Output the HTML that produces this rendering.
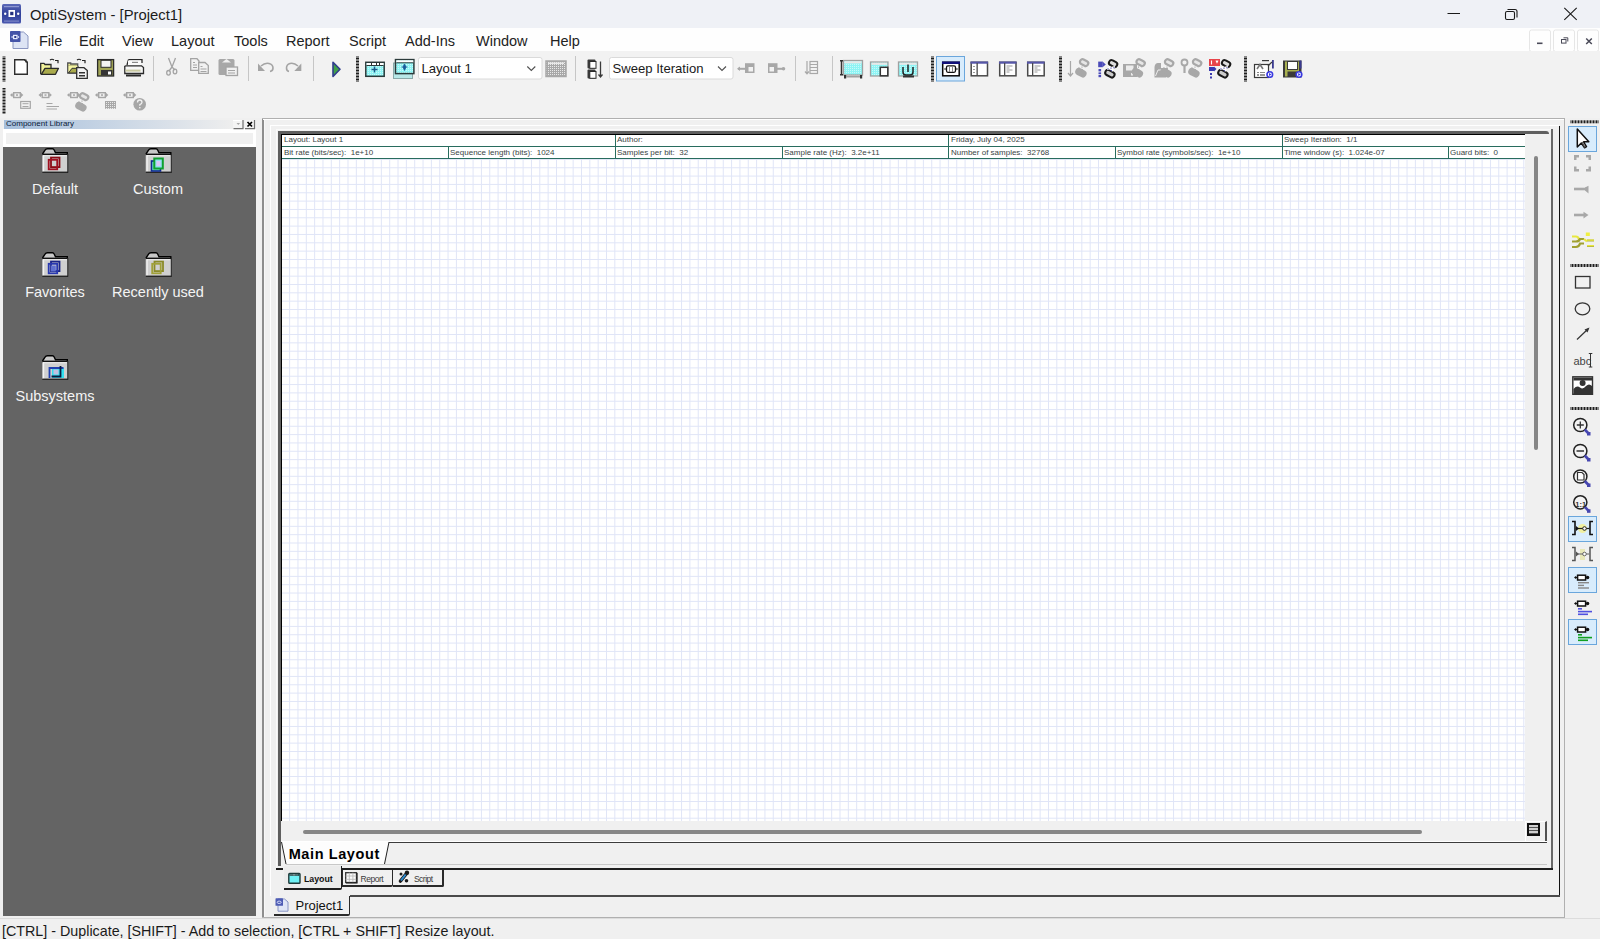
<!DOCTYPE html>
<html><head><meta charset="utf-8">
<style>
*{box-sizing:border-box;margin:0;padding:0}
html,body{width:1600px;height:939px;overflow:hidden;background:#f0f0f0;font-family:"Liberation Sans",sans-serif;color:#000}
.a{position:absolute}
.t{position:absolute;white-space:pre;line-height:1}
#title{left:0;top:0;width:1600px;height:28px;background:#eff1f6}
#menu{left:0;top:28px;width:1600px;height:23px;background:#fefefe}
#tb{left:0;top:51px;width:1600px;height:67px;background:#f2f2f2}
.grip{position:absolute;width:3px;background:repeating-linear-gradient(#1a1a1a 0 2px,transparent 2px 3px)}
.hgrip{position:absolute;height:3px;background:repeating-linear-gradient(90deg,#1a1a1a 0 2px,transparent 2px 3px)}
.sep{position:absolute;width:1px;background:#c8c8c8}
.menu{font-size:14.5px;color:#222}
.combo{position:absolute;background:#fff;border:1px solid #d9d9d9;border-radius:2px}
#lib{left:0;top:118px;width:258px;height:800px}
#libpanel{left:3px;top:147px;width:253px;height:769px;background:#646464}
.fl{position:absolute;color:#f4f4f4;font-size:14.5px;text-align:center;width:104px}
#status{left:0;top:918px;width:1600px;height:21px;background:#f0f0f0;border-top:1px solid #dcdcdc}
#page{left:282px;top:135px;width:1243px;height:686px;background-color:#fff;
 }
.hd{position:absolute;font-size:8px;color:#3a4444;white-space:pre;line-height:1}
</style></head><body>

<!-- Title bar -->
<div id="title" class="a"></div>
<div class="t" style="left:30px;top:7.7px;font-size:14.8px;color:#1b1b1b">OptiSystem - [Project1]</div>

<!-- Menu bar -->
<div id="menu" class="a"></div>
<div class="t menu" style="left:39px;top:33.8px">File</div>
<div class="t menu" style="left:79px;top:33.8px">Edit</div>
<div class="t menu" style="left:122px;top:33.8px">View</div>
<div class="t menu" style="left:171px;top:33.8px">Layout</div>
<div class="t menu" style="left:234px;top:33.8px">Tools</div>
<div class="t menu" style="left:286px;top:33.8px">Report</div>
<div class="t menu" style="left:349px;top:33.8px">Script</div>
<div class="t menu" style="left:405px;top:33.8px">Add-Ins</div>
<div class="t menu" style="left:476px;top:33.8px">Window</div>
<div class="t menu" style="left:550px;top:33.8px">Help</div>

<!-- title icons -->
<svg class="a" style="left:0;top:0" width="1600" height="56">
 <defs>
  <linearGradient id="appg" x1="0" y1="0" x2="0" y2="1"><stop offset="0" stop-color="#5a68b8"/><stop offset=".5" stop-color="#2f3f98"/><stop offset="1" stop-color="#4a58b0"/></linearGradient>
 </defs>
 <rect x="2" y="4" width="19" height="19.5" rx="1.5" fill="url(#appg)"/>
 <rect x="4" y="6" width="15" height="1.2" fill="#8c96d0"/>
 <rect x="4" y="20.5" width="15" height="1.2" fill="#7c88c8"/>
 <rect x="8.5" y="10" width="6.5" height="7" fill="#fff"/>
 <rect x="10.2" y="11.8" width="3.2" height="3.4" fill="#23307e"/>
 <circle cx="5.2" cy="13.8" r="1.2" fill="#fff"/><circle cx="18.2" cy="13.8" r="1.2" fill="#fff"/>
 <!-- menu doc icon -->
 <path d="M13,32 H23.5 L28,36 V48.5 H13 Z" fill="#dde4f4" stroke="#8a96c0" stroke-width="1"/>
 <rect x="10" y="31" width="10.5" height="11" rx="0.8" fill="#4454a8"/>
 <rect x="13" y="34.8" width="4.6" height="4.4" fill="#e8ecff"/>
 <rect x="14.3" y="36" width="2" height="2" fill="#2a3888"/>
 <path d="M11,37 L12.6,35.8 V38.2 Z M19.5,37 L17.9,35.8 V38.2 Z" fill="#e8ecff"/>
 <!-- window controls -->
 <rect x="1447.5" y="13" width="12.5" height="1" fill="#1a1a1a"/>
 <rect x="1505.5" y="11.5" width="9" height="8" rx="1.5" fill="none" stroke="#1a1a1a" stroke-width="1.1"/>
 <path d="M1507.5,9.5 H1515 Q1517,9.5 1517,11.5 V17.5" fill="none" stroke="#1a1a1a" stroke-width="1.1"/>
 <path d="M1564.3,7.8 L1576.7,19.8 M1576.7,7.8 L1564.3,19.8" stroke="#1a1a1a" stroke-width="1.1"/>
 <!-- mdi buttons -->
 <g fill="#fefefe" stroke="#e6e6e6" stroke-width="1">
  <rect x="1529.5" y="30" width="21" height="21.5" rx="2"/>
  <rect x="1553.5" y="30" width="21" height="21.5" rx="2"/>
  <rect x="1577.5" y="30" width="21" height="21.5" rx="2"/>
 </g>
 <rect x="1537" y="42.5" width="5.5" height="1.6" fill="#4a4a58"/>
 <rect x="1561.5" y="39.5" width="4.5" height="3.6" fill="none" stroke="#4a4a58" stroke-width="1"/>
 <path d="M1563.5,37.8 H1567.8 V41.5" fill="none" stroke="#4a4a58" stroke-width="1"/>
 <path d="M1586.2,38.5 L1591.8,44 M1591.8,38.5 L1586.2,44" stroke="#4a4a58" stroke-width="1.5"/>
</svg>

<!-- Toolbar -->
<div id="tb" class="a"></div>

<!-- toolbar icons -->
<svg class="a" style="left:0;top:0" width="1600" height="118">
 <!-- grips -->
 <g fill="#1a1a1a">
  <rect x="2.5" y="56" width="3" height="26" fill="url(#gp)"/>
 </g>
 <defs>
  <pattern id="gp" width="3" height="3" patternUnits="userSpaceOnUse" y="0.5"><rect width="3" height="2" fill="#1e1e1e"/></pattern>
  <pattern id="hgp" width="3" height="3" patternUnits="userSpaceOnUse"><rect width="2" height="3" fill="#262626"/></pattern>
 </defs>
 <rect x="2.5" y="88" width="3" height="26" fill="url(#gp)"/>
 <rect x="356" y="56" width="3" height="26" fill="url(#gp)"/>
 <rect x="931" y="56" width="3" height="26" fill="url(#gp)"/>
 <rect x="1059" y="56" width="3" height="26" fill="url(#gp)"/>
 <rect x="1244" y="56" width="3" height="26" fill="url(#gp)"/>
 <!-- separators -->
 <g fill="#c6c6c6">
  <rect x="153" y="56" width="1" height="25"/>
  <rect x="248" y="56" width="1" height="25"/>
  <rect x="313" y="56" width="1" height="25"/>
  <rect x="575" y="56" width="1" height="25"/>
  <rect x="795" y="56" width="1" height="25"/>
  <rect x="832" y="56" width="1" height="25"/>
 </g>
 <!-- new -->
 <path d="M14.7,59.7 H24.5 L27.3,62.5 V74.3 H14.7 Z" fill="#fff" stroke="#2e2e2e" stroke-width="1.4"/>
 <path d="M24,60 h2 v2 h2" fill="none" stroke="#2e2e2e" stroke-width="1.2"/>
 <!-- open -->
 <path d="M40.7,74.3 V63.3 H44 L45,64.5 H51 V68.3" fill="#f2f29a" stroke="#2a2a2a" stroke-width="1.3"/>
 <path d="M41.3,74.3 L45,68.3 H58.5 L55.5,74.3 Z" fill="#a9aa4c" stroke="#2a2a2a" stroke-width="1.3" stroke-linejoin="round"/>
 <path d="M50,60 q2,-1.5 4,0 M55,60.5 h3 v2.8" fill="none" stroke="#222" stroke-width="1.2"/>
 <!-- open2 -->
 <path d="M67.7,63 h3 v1 h7 v2.5 H67.7 Z" fill="#e8e890" stroke="#555" stroke-width="1.3"/>
 <path d="M67.7,66 V73 H78 V66" fill="#f4f4a0" stroke="#555" stroke-width="1.3"/>
 <path d="M68.5,73 L72,68.3 H78 V73 Z" fill="#a9aa4c" stroke="#333" stroke-width="1"/>
 <path d="M77,60 q2,-1.5 4,0 M82,60.5 h3 v2.8" fill="none" stroke="#222" stroke-width="1.2"/>
 <path d="M76.7,67.7 H84 L87.3,70.5 V78.3 H76.7 Z" fill="#f4f4f4" stroke="#2e2e2e" stroke-width="1.3"/>
 <rect x="79" y="72" width="6" height="1.5" fill="#333"/><rect x="79" y="75" width="6" height="1.5" fill="#333"/>
 <!-- save -->
 <rect x="97.6" y="59.6" width="16" height="16.4" fill="#a2a556" stroke="#2a2a2a" stroke-width="1.3"/>
 <rect x="101" y="60.3" width="10" height="7" fill="#f4f4f4" stroke="#2a2a2a" stroke-width="1"/>
 <rect x="101" y="70" width="11.5" height="5.5" fill="#353535"/>
 <rect x="108" y="71.5" width="3" height="3" fill="#fff"/>
 <!-- print -->
 <path d="M128.5,59.7 H142 V63 M128.5,59.7 L127,65" fill="#fff" stroke="#2a2a2a" stroke-width="1.3"/>
 <rect x="128" y="60.5" width="13" height="5" fill="#fafafa"/>
 <rect x="132" y="61.8" width="6" height="1.2" fill="#8a8a8a"/>
 <path d="M124.8,67.5 Q124.2,66 126,65.8 H141.5 L143.5,67.5 V73.5 H124.8 Z" fill="#f6f6f6" stroke="#2a2a2a" stroke-width="1.3"/>
 <rect x="125.5" y="69.6" width="15" height="2" fill="#c8c8a0"/>
 <rect x="126" y="74.5" width="15" height="2" fill="#2a2a2a"/>
 <!-- cut -->
 <g fill="none" stroke="#a4a4a4" stroke-width="1.3">
  <path d="M168.5,58 L172,67 M175.5,58 L172,67 M172,67 L169,71 M172,67 L175,70"/>
  <ellipse cx="168.5" cy="72.8" rx="1.8" ry="2.3"/>
  <ellipse cx="175" cy="71.5" rx="1.8" ry="2.3"/>
 </g>
 <!-- copy -->
 <g fill="#f2f2f2" stroke="#a4a4a4" stroke-width="1.3">
  <path d="M190.7,58.7 H197 L199,61 V70.3 H190.7 Z"/>
  <path d="M198.7,62.5 H205 L208.3,65.5 V73.3 H198.7 Z"/>
 </g>
 <g fill="#a4a4a4"><rect x="193" y="62" width="2" height="1"/><rect x="193" y="64.5" width="4" height="1"/><rect x="193" y="67" width="4" height="1"/><rect x="200.5" y="66" width="2" height="1"/><rect x="200.5" y="68.5" width="6" height="1"/><rect x="200.5" y="71" width="6" height="1"/></g>
 <!-- paste -->
 <rect x="218.5" y="59" width="16" height="16" rx="1.5" fill="#a8a8a8"/>
 <path d="M222,62.5 L226.5,59 L231,62.5 Z" fill="#f0f0f0"/>
 <rect x="226" y="67" width="11.5" height="8.5" fill="#f0f0f0" stroke="#a4a4a4" stroke-width="1.3"/>
 <rect x="228" y="70" width="7" height="1" fill="#a4a4a4"/><rect x="228" y="72.5" width="7" height="1" fill="#a4a4a4"/>
 <!-- undo/redo -->
 <g fill="none" stroke="#a4a4a4" stroke-width="1.6">
  <path d="M261,66 Q265,62.5 269,63.5 Q273,64.5 273,68 Q273,71 270,71.5"/>
  <path d="M298,66 Q294,62.5 290,63.5 Q286.5,64.5 286.5,68 Q286.5,71 289,71.5"/>
 </g>
 <path d="M258,63.5 V71 H265 Z" fill="#a4a4a4"/>
 <path d="M301.3,63.5 V71 H294.3 Z" fill="#a4a4a4"/>
 <!-- play -->
 <path d="M333,62.2 L340,69.3 L333,76.5 Z" fill="#40a048" stroke="#303c8c" stroke-width="1.6" stroke-linejoin="round"/>
</svg>

<!-- toolbar icons part 2 -->
<svg class="a" style="left:0;top:0" width="1600" height="118">
 <defs>
  <pattern id="cy" width="2" height="2" patternUnits="userSpaceOnUse"><rect width="2" height="2" fill="#8ef4f4"/><rect width="1" height="1" fill="#c8fafa"/></pattern>
  <pattern id="gd" width="2" height="2" patternUnits="userSpaceOnUse"><rect width="2" height="2" fill="#a8a8a8"/><rect width="1" height="1" fill="#e8e8e8"/></pattern>
  <g id="chD">
   <rect x="4.8" y="1" width="8.6" height="5.2" rx="2.4" transform="rotate(28 9.1 3.6)" fill="#ddd" stroke="#1a1a1a" stroke-width="2"/>
   <rect x="1" y="11" width="9.8" height="5.4" rx="2.6" transform="rotate(28 5.9 13.7)" fill="#ccc" stroke="#1a1a1a" stroke-width="2"/>
   <path d="M3,9 L11,7 M5,6.5 L9,11" stroke="#fff" stroke-width="2.2"/>
   <path d="M3.5,8.8 h1 M6.5,8.2 h1 M9.5,7.6 h1 M6.8,10.6 h1" stroke="#3a3aa0" stroke-width="1.2"/>
  </g>
  <g id="chG">
   <rect x="4.8" y="1" width="8.6" height="5.2" rx="2.4" transform="rotate(28 9.1 3.6)" fill="#e6e6e6" stroke="#a8a8a8" stroke-width="2.2"/>
   <rect x="1" y="11" width="9.8" height="5.4" rx="2.6" transform="rotate(28 5.9 13.7)" fill="#a8a8a8" stroke="#a8a8a8" stroke-width="2"/>
   <path d="M3.5,8.8 h1 M6.5,8.2 h1 M9.5,7.6 h1 M6.8,10.6 h1" stroke="#a8a8a8" stroke-width="1.2"/>
  </g>
 </defs>
 <!-- layout add -->
 <rect x="365.8" y="62.3" width="18.4" height="14" fill="url(#cy)" stroke="#2b3a3a" stroke-width="1.5"/>
 <rect x="366.6" y="63" width="17" height="2.2" fill="#fff"/>
 <rect x="371" y="62.5" width="1" height="2.5" fill="#333"/><rect x="376" y="62.5" width="1" height="2.5" fill="#333"/><rect x="379" y="62.5" width="1" height="2.5" fill="#333"/>
 <rect x="366.5" y="65" width="17" height="1" fill="#2b3a3a"/>
 <path d="M374.5,66.5 V72.5 M371.5,69.5 H377.5" stroke="#1a5a8a" stroke-width="1.4"/>
 <!-- layout icon2 -->
 <rect x="393.5" y="63" width="19" height="15.5" fill="#b8e8e8" stroke="#8aa8a8" stroke-width="1"/>
 <rect x="395.5" y="59.6" width="18.4" height="14" fill="url(#cy)" stroke="#2b3a3a" stroke-width="1.5"/>
 <rect x="396.3" y="60.3" width="17" height="2.2" fill="#fff"/>
 <rect x="396.3" y="62.3" width="17" height="1" fill="#2b3a3a"/>
 <path d="M404.5,64 L406,67 L404.5,70.5 L403,67 Z M401.5,67 H407.5" fill="#1a5a9a" stroke="#1a5a9a" stroke-width="0.8"/>
 <!-- combos -->
 <rect x="418.5" y="57.5" width="123.5" height="21.5" rx="2" fill="#fff" stroke="#dadada" stroke-width="1"/>
 <path d="M527.3,66.5 L531.3,70.5 L535.3,66.5" fill="none" stroke="#505050" stroke-width="1.1"/>
 <rect x="609.5" y="57.5" width="123.5" height="21.5" rx="2" fill="#fff" stroke="#dadada" stroke-width="1"/>
 <path d="M718,66.5 L722,70.5 L726,66.5" fill="none" stroke="#505050" stroke-width="1.1"/>
 <!-- grid gray -->
 <rect x="546" y="61" width="20" height="15.5" fill="url(#gd)"/>
 <rect x="546" y="61" width="20" height="15.5" fill="none" stroke="#a8a8a8" stroke-width="1.5"/>
 <rect x="548" y="62.5" width="16" height="1.5" fill="#e8e8e8"/>
 <!-- sweep icon -->
 <rect x="587.5" y="59.5" width="8" height="9" rx="1" fill="#3a3a3a"/>
 <rect x="589.8" y="61.5" width="6.2" height="6.8" fill="#fff" stroke="#2a2a2a" stroke-width="1"/>
 <rect x="587.5" y="69.5" width="8" height="9" rx="1" fill="#3a3a3a"/>
 <rect x="589.8" y="71.5" width="6.2" height="6.8" fill="#fff" stroke="#2a2a2a" stroke-width="1"/>
 <path d="M600.5,61.5 V76.5 M598.5,74.5 L600.5,77 L602.5,74.5" fill="none" stroke="#3a3a3a" stroke-width="1.3"/>
 <!-- 747 / 776 -->
 <rect x="745" y="63.2" width="9.5" height="9.8" fill="#a8a8a8"/><rect x="748.5" y="67" width="4.5" height="4.5" fill="#f2f2f2"/>
 <path d="M738,68.8 H745" stroke="#a8a8a8" stroke-width="2"/><path d="M737,68.8 L740,66.5 V71 Z" fill="#a8a8a8"/>
 <rect x="768" y="63.2" width="9.5" height="9.8" fill="#a8a8a8"/><rect x="769.5" y="67" width="4.5" height="4.5" fill="#f2f2f2"/>
 <path d="M777,68.8 H784" stroke="#a8a8a8" stroke-width="2"/><circle cx="783.5" cy="68.8" r="1.8" fill="#a8a8a8"/>
 <!-- 812 -->
 <path d="M807,61 V73.5 M805,71.5 L807,73.8 L809,71.5" fill="none" stroke="#a8a8a8" stroke-width="1.2"/>
 <rect x="810" y="61.5" width="7.5" height="12" fill="none" stroke="#a8a8a8" stroke-width="1.2"/>
 <path d="M810,64.5 H817.5 M810,67.5 H817.5 M810,70.5 H817.5" stroke="#a8a8a8" stroke-width="1"/>
 <!-- A -->
 <rect x="843.5" y="60.5" width="19" height="14.5" fill="url(#cy)" stroke="#a0a0a0" stroke-width="1.3"/>
 <rect x="844.5" y="61.2" width="17" height="2.2" fill="#e8e8e8"/>
 <path d="M841.5,60.5 V75 M840,60.8 H843 M840,74.8 H843" stroke="#333" stroke-width="1.5"/>
 <rect x="844" y="75" width="2.2" height="3.5" fill="#333"/><rect x="860" y="75" width="2.2" height="3.5" fill="#333"/>
 <rect x="846" y="76" width="14" height="1.5" fill="#a0a0a0"/>
 <!-- B -->
 <rect x="870.5" y="62" width="17.5" height="14" fill="url(#cy)" stroke="#a0a0a0" stroke-width="1.3"/>
 <rect x="871.5" y="62.8" width="15.5" height="2" fill="#e8e8e8"/>
 <rect x="880.3" y="67.3" width="7.5" height="8.5" fill="#fff" stroke="#333" stroke-width="1.5"/>
 <!-- C -->
 <rect x="898.5" y="62" width="19" height="14" fill="url(#cy)" stroke="#a0a0a0" stroke-width="1.3"/>
 <rect x="899.5" y="62.8" width="17" height="2" fill="#e8e8e8"/>
 <path d="M903,67 V72 Q903,75 906,75 H910 Q913,75 913,72 V67 M908,64.5 V72" fill="none" stroke="#222" stroke-width="1.5"/>
 <rect x="903" y="75.5" width="11" height="2" fill="#333"/>
 <!-- selected button -->
 <rect x="936.5" y="56.5" width="28" height="24.5" fill="#d8ecfc" stroke="#6aa6dc" stroke-width="1"/>
 <!-- D -->
 <rect x="942.7" y="62.3" width="16.5" height="13.5" fill="#fff" stroke="#0a0a0a" stroke-width="1.5"/>
 <rect x="942" y="61.5" width="18" height="2.5" fill="#10107a"/>
 <rect x="946.5" y="65.8" width="9" height="6.5" rx="1.5" fill="#fff" stroke="#111" stroke-width="1.3"/>
 <path d="M949.5,66 V72 M952.5,66 V72" stroke="#888" stroke-width="1"/>
 <path d="M944.2,69 H946.5 M955.5,69 H957.8" stroke="#111" stroke-width="1.2"/>
 <!-- E F G -->
 <g fill="#fff" stroke="#4a4a4a" stroke-width="1.5">
  <rect x="971.2" y="62.3" width="16.3" height="13.5"/>
  <rect x="999.7" y="62.3" width="16.3" height="13.5"/>
  <rect x="1027.7" y="62.3" width="16.5" height="13.5"/>
 </g>
 <g fill="#5656a8">
  <rect x="970.5" y="61.5" width="17.5" height="2.2"/>
  <rect x="999" y="61.5" width="17.5" height="2.2"/>
  <rect x="1027" y="61.5" width="17.5" height="2.2"/>
 </g>
 <g fill="#4a4a4a">
  <rect x="976.5" y="63" width="1.3" height="12.5"/>
  <rect x="1004" y="63" width="1.3" height="12.5"/>
  <rect x="1032" y="63" width="1.3" height="12.5"/>
 </g>
 <g fill="#9a9a9a">
  <rect x="973" y="66" width="2" height="1"/><rect x="973" y="69" width="2" height="1"/><rect x="973" y="72" width="2" height="1"/>
  <rect x="1006.5" y="65.5" width="6" height="1"/><rect x="1006.5" y="67.5" width="3" height="1"/><rect x="1006.5" y="69.5" width="6" height="1"/><rect x="1006.5" y="71.5" width="3" height="1"/>
  <rect x="1034.5" y="65.5" width="6" height="1"/><rect x="1034.5" y="67.5" width="3" height="1"/><rect x="1034.5" y="69.5" width="6" height="1"/><rect x="1034.5" y="71.5" width="3" height="1"/>
 </g>
 <!-- H gray -->
 <path d="M1070.5,61 V75.5 M1068,73 L1070.5,76 L1073,73" fill="none" stroke="#a8a8a8" stroke-width="1.2"/>
 <use href="#chG" x="1075" y="59"/>
 <!-- I -->
 <rect x="1098.2" y="61.6" width="4.5" height="5.6" fill="#4a4ab8"/><path d="M1102.5,61.6 L1105.8,64.4 L1102.5,67.2 Z" fill="#4a4ab8"/>
 <rect x="1098.5" y="69" width="2.6" height="2.4" fill="#4a4ab8"/><rect x="1098.5" y="72.4" width="2.6" height="1.8" fill="#4a4ab8"/><rect x="1098.5" y="75" width="2.6" height="2.2" fill="#4a4ab8"/>
 <use href="#chD" x="1104" y="60"/>
 <!-- J gray save + link -->
 <rect x="1123" y="64" width="14" height="13" fill="#a8a8a8"/><rect x="1126" y="65.5" width="7.5" height="5" fill="#ececec"/><rect x="1131" y="73" width="2" height="2.5" fill="#ececec"/>
 <use href="#chG" x="1131.5" y="59"/>
 <!-- K gray folder + link -->
 <path d="M1154.5,67 Q1155,63 1158,63 H1161 V68 H1168 L1166,77.5 H1154.5 Z" fill="#a8a8a8"/>
 <path d="M1155.5,76 L1158,70 H1166" fill="none" stroke="#ececec" stroke-width="1"/>
 <use href="#chG" x="1160" y="59"/>
 <!-- L key + link -->
 <circle cx="1184.5" cy="62.5" r="3" fill="none" stroke="#a8a8a8" stroke-width="1.8"/>
 <path d="M1184.5,65.5 V73" stroke="#a8a8a8" stroke-width="2.2"/>
 <use href="#chG" x="1188" y="59"/>
 <!-- M red/blue -->
 <rect x="1209" y="59" width="11" height="7" fill="#e8444a"/>
 <path d="M1211.5,60.5 V64.5 M1216,60.5 L1217,62.5 L1218,60.5" stroke="#fff" stroke-width="1.1" fill="none"/>
 <rect x="1209" y="67" width="5" height="4" fill="#3a3ab0"/><path d="M1214,66.5 L1216.5,69 L1214,71.5 Z" fill="#3a3ab0"/>
 <rect x="1210" y="73" width="2" height="2" fill="#3a3ab0"/><rect x="1210" y="76.5" width="2" height="2" fill="#3a3ab0"/>
 <use href="#chD" x="1217" y="60"/>
 <!-- N -->
 <rect x="1254.5" y="64.5" width="14" height="13" fill="#fff" stroke="#3a3a3a" stroke-width="1.2"/>
 <path d="M1257,69 L1260,64.5 L1263,69" fill="none" stroke="#777" stroke-width="1.6"/>
 <rect x="1262" y="60" width="7" height="1.2" fill="#3a3a3a"/>
 <rect x="1272" y="60" width="1.8" height="8.5" fill="#3a3a90"/>
 <path d="M1268,66 L1272,62" stroke="#3a3a3a" stroke-width="1.2"/>
 <rect x="1257" y="72" width="2" height="1" fill="#888"/><rect x="1260" y="72" width="5" height="1" fill="#888"/>
 <rect x="1257" y="74.5" width="2" height="1" fill="#333"/><rect x="1260" y="74.5" width="5" height="1" fill="#333"/>
 <circle cx="1269.8" cy="74.5" r="2.8" fill="#fff" stroke="#3a3ae0" stroke-width="1.6"/><path d="M1269,73 L1271.5,74.5 L1269,76 Z" fill="#3a3ae0"/>
 <!-- O save -->
 <rect x="1283" y="60.5" width="18.5" height="17" fill="#3a3a3a"/>
 <rect x="1285" y="61.5" width="14" height="15" fill="#a8b050"/>
 <rect x="1287.5" y="61.5" width="10" height="8" fill="#fff" stroke="#3a3a3a" stroke-width="1"/>
 <rect x="1287.5" y="71.5" width="10" height="5.5" fill="#3a3a3a"/>
 <rect x="1299.5" y="60.5" width="2" height="8" fill="#3a3a90"/>
 <circle cx="1299" cy="74.5" r="2.8" fill="#fff" stroke="#3a3ae0" stroke-width="1.6"/><path d="M1298.2,73 L1300.7,74.5 L1298.2,76 Z" fill="#3a3ae0"/>
</svg>
<div class="t" style="left:421.5px;top:61.5px;font-size:13.1px;color:#1a1a1a">Layout 1</div>
<div class="t" style="left:612.5px;top:61.5px;font-size:13.1px;color:#1a1a1a">Sweep Iteration</div>

<!-- toolbar row 2 -->
<svg class="a" style="left:0;top:0" width="160" height="118">
 <defs>
  <g id="blk">
   <path d="M0,3 L2.5,0.8 V5.2 Z" fill="#a6a6a6"/>
   <rect x="2" y="2.3" width="2" height="1.4" fill="#a6a6a6"/>
   <rect x="3.7" y="0.7" width="6.6" height="4.8" fill="#f0f0f0" stroke="#a6a6a6" stroke-width="1.4"/>
   <rect x="6" y="2.3" width="2" height="1.5" fill="#a6a6a6"/>
   <rect x="10" y="2.3" width="1.5" height="1.4" fill="#a6a6a6"/>
   <path d="M11,0.8 L13.3,3 L11,5.2 Z" fill="#a6a6a6"/>
  </g>
 </defs>
 <use href="#blk" x="10" y="92"/>
 <use href="#blk" x="38.5" y="92"/>
 <use href="#blk" x="67" y="92"/>
 <use href="#blk" x="95" y="92"/>
 <use href="#blk" x="123" y="92"/>
 <rect x="20.7" y="101.5" width="9.6" height="6.8" fill="none" stroke="#a6a6a6" stroke-width="1.2"/>
 <rect x="22.5" y="103.2" width="6" height="1" fill="#a6a6a6"/><rect x="22.5" y="106" width="6" height="1" fill="#a6a6a6"/>
 <rect x="46.5" y="103" width="6" height="1" fill="#a6a6a6"/><rect x="46.5" y="106" width="12.5" height="1" fill="#a6a6a6"/><rect x="46.5" y="108.5" width="10.5" height="1" fill="#a6a6a6"/>
 <use href="#chG" x="75" y="93"/>
 <rect x="105" y="101" width="11" height="7.8" fill="url(#gd)"/>
 <circle cx="139.7" cy="104.3" r="6.3" fill="#a6a6a6"/>
 <path d="M137.5,102.5 Q137.5,100 139.7,100 Q142,100 142,102.3 Q142,103.8 139.8,104.6 V105.8" fill="none" stroke="#f0f0f0" stroke-width="1.3"/>
 <rect x="139.1" y="107" width="1.4" height="1.4" fill="#f0f0f0"/>
</svg>

<!-- Component library -->
<div class="a" style="left:4px;top:120px;width:229px;height:9px;background:linear-gradient(90deg,#a6bfdc,#eeeeee)"></div>
<div class="t" style="left:6px;top:120px;font-size:8px;color:#0a1a3a">Component Library</div>
<div class="a" style="left:3px;top:129px;width:253px;height:18px;background:#fff"></div>
<div class="a" style="left:6px;top:133px;width:247px;height:11px;background:#f0f0f0"></div>
<svg class="a" style="left:230px;top:118px" width="28" height="14">
 <rect x="3" y="2" width="10" height="9" fill="#f4f4f4"/>
 <path d="M3,2.5 H13" stroke="#fff" stroke-width="1"/>
 <path d="M3.5,10.6 H13 V2" fill="none" stroke="#707070" stroke-width="1.2"/>
 <path d="M6.5,5 L8.3,7 L10.1,5 Z" fill="#a8a8a8"/>
 <rect x="15" y="2" width="9.5" height="9" fill="#f4f4f4"/>
 <path d="M15,10.6 H24.5 V2" fill="none" stroke="#707070" stroke-width="1.2"/>
 <path d="M17.5,4 L22,8.5 M22,4 L17.5,8.5" stroke="#000" stroke-width="1.7"/>
</svg>

<div id="libpanel" class="a"></div>
<div class="fl" style="left:3px;top:180.8px">Default</div>
<div class="fl" style="left:106px;top:180.8px">Custom</div>
<div class="fl" style="left:3px;top:284.3px">Favorites</div>
<div class="fl" style="left:106px;top:284.3px">Recently used</div>
<div class="fl" style="left:3px;top:387.8px">Subsystems</div>

<!-- folder icons -->
<svg class="a" style="left:0;top:140px" width="258" height="250">
 <defs>
  <g id="fold">
   <path d="M0.5,6 L3,2.2 Q3.8,0.8 5.5,0.8 H10.5 Q11.6,0.8 12.3,2.2 L13.5,4.8 H25.3 V6" fill="#c8c8c8" stroke="#000" stroke-width="1.4"/>
   <rect x="0.2" y="6.3" width="25.6" height="18.2" fill="#d0d0d0"/>
   <rect x="0.2" y="5.6" width="25.6" height="1.6" fill="#111"/>
   <rect x="1" y="7.2" width="24" height="1" fill="#f4f4f4"/>
   <rect x="1" y="7.2" width="1.2" height="16.5" fill="#f4f4f4"/>
   <rect x="0.2" y="23.6" width="25.8" height="1.3" fill="#1a1a1a"/>
   <rect x="25.3" y="6" width="1" height="18.8" fill="#222"/>
  </g>
 </defs>
 <use href="#fold" x="42" y="8"/>
 <use href="#fold" x="145.5" y="8"/>
 <use href="#fold" x="42" y="112"/>
 <use href="#fold" x="145.5" y="112"/>
 <use href="#fold" x="42" y="215"/>
 <!-- emblems -->
 <g fill="none" stroke-width="1.8">
  <rect x="51" y="17.6" width="8.5" height="9.5" stroke="#8a0a14"/>
  <rect x="48.7" y="19.8" width="8.5" height="9.5" stroke="#a01020"/>
 </g>
 <rect x="151.5" y="21" width="9" height="10" fill="#70e8d0" stroke="#102890" stroke-width="1.6"/>
 <rect x="154.3" y="18.5" width="8.5" height="10" fill="#90e0f0" stroke="#10a030" stroke-width="2"/>
 <rect x="156.5" y="21" width="4" height="5" fill="#d8c8f8"/>
 <g fill="none" stroke-width="1.8">
  <rect x="51" y="121.6" width="8.5" height="9.5" stroke="#1a2488"/>
  <rect x="48.7" y="123.8" width="8.5" height="9.5" stroke="#2838b0"/>
 </g>
 <rect x="50.8" y="125.5" width="5" height="6" fill="#6070d0"/>
 <g fill="none" stroke-width="1.8">
  <rect x="154.5" y="121.6" width="8.5" height="9.5" stroke="#8a8a28"/>
  <rect x="152.2" y="123.8" width="8.5" height="9.5" stroke="#a0a038"/>
 </g>
 <rect x="52" y="228" width="12" height="10" fill="#30e0f0"/>
 <path d="M49.5,238 V228 H63.5" fill="none" stroke="#2040b0" stroke-width="1.8"/>
 <path d="M51.5,236.5 H60.5 V226" fill="none" stroke="#0a1a40" stroke-width="1.8"/>
 <rect x="53.5" y="229.5" width="5" height="5" fill="#c0c0e0"/>
</svg>
<!-- MDI client -->
<div class="a" style="left:262px;top:118px;width:1303px;height:800px;border:1px solid #b0b0b0;background:#f0f0f0"></div>
<div class="a" style="left:262px;top:119px;width:2px;height:798px;background:#8e8e8e"></div>
<div class="a" style="left:264px;top:119px;width:1px;height:798px;background:#f8f8f8"></div>
<div class="a" style="left:263px;top:119px;width:1301px;height:1px;background:#fff"></div>
<!-- Project1 child frame -->
<div class="a" style="left:270px;top:125px;width:1289px;height:1px;background:#fff"></div>
<div class="a" style="left:270px;top:125px;width:1px;height:771px;background:#fff"></div>
<div class="a" style="left:1559px;top:126px;width:1px;height:771px;background:#111"></div>
<div class="a" style="left:350px;top:895px;width:1210px;height:2px;background:#4a4a4a"></div>
<!-- Layout child frame -->
<div class="a" style="left:276px;top:129px;width:1275px;height:1px;background:#fafafa"></div>
<div class="a" style="left:276px;top:129px;width:1px;height:740px;background:#fafafa"></div>
<div class="a" style="left:1551px;top:129px;width:2px;height:741px;background:#686868"></div>
<div class="a" style="left:342px;top:868px;width:1211px;height:2px;background:#1e1e1e"></div>
<div class="a" style="left:276px;top:868px;width:7px;height:2px;background:#1e1e1e"></div>
<!-- layout view border -->
<div class="a" style="left:278px;top:131px;width:1271px;height:3px;background:#5f5f5f;border-top-right-radius:3px"></div>
<div class="a" style="left:278px;top:131px;width:3px;height:735px;background:#5f5f5f"></div>
<div class="a" style="left:281px;top:134px;width:1244px;height:1px;background:#000"></div>
<div class="a" style="left:281px;top:134px;width:1px;height:687px;background:#000"></div>
<!-- page -->
<div id="page" class="a"></div>
<svg class="a" style="left:282px;top:135px" width="1243" height="686"><path d="M7.62,0V686M15.96,0V686M24.30,0V686M32.64,0V686M40.98,0V686M49.31,0V686M57.65,0V686M65.99,0V686M74.33,0V686M82.67,0V686M91.01,0V686M99.35,0V686M107.69,0V686M116.03,0V686M124.37,0V686M132.70,0V686M141.04,0V686M149.38,0V686M157.72,0V686M166.06,0V686M174.40,0V686M182.74,0V686M191.08,0V686M199.42,0V686M207.76,0V686M216.09,0V686M224.43,0V686M232.77,0V686M241.11,0V686M249.45,0V686M257.79,0V686M266.13,0V686M274.47,0V686M282.81,0V686M291.15,0V686M299.49,0V686M307.82,0V686M316.16,0V686M324.50,0V686M332.84,0V686M341.18,0V686M349.52,0V686M357.86,0V686M366.20,0V686M374.54,0V686M382.88,0V686M391.21,0V686M399.55,0V686M407.89,0V686M416.23,0V686M424.57,0V686M432.91,0V686M441.25,0V686M449.59,0V686M457.93,0V686M466.27,0V686M474.60,0V686M482.94,0V686M491.28,0V686M499.62,0V686M507.96,0V686M516.30,0V686M524.64,0V686M532.98,0V686M541.32,0V686M549.66,0V686M557.99,0V686M566.33,0V686M574.67,0V686M583.01,0V686M591.35,0V686M599.69,0V686M608.03,0V686M616.37,0V686M624.71,0V686M633.05,0V686M641.38,0V686M649.72,0V686M658.06,0V686M666.40,0V686M674.74,0V686M683.08,0V686M691.42,0V686M699.76,0V686M708.10,0V686M716.44,0V686M724.77,0V686M733.11,0V686M741.45,0V686M749.79,0V686M758.13,0V686M766.47,0V686M774.81,0V686M783.15,0V686M791.49,0V686M799.83,0V686M808.16,0V686M816.50,0V686M824.84,0V686M833.18,0V686M841.52,0V686M849.86,0V686M858.20,0V686M866.54,0V686M874.88,0V686M883.22,0V686M891.55,0V686M899.89,0V686M908.23,0V686M916.57,0V686M924.91,0V686M933.25,0V686M941.59,0V686M949.93,0V686M958.27,0V686M966.61,0V686M974.94,0V686M983.28,0V686M991.62,0V686M999.96,0V686M1008.30,0V686M1016.64,0V686M1024.98,0V686M1033.32,0V686M1041.66,0V686M1050.00,0V686M1058.33,0V686M1066.67,0V686M1075.01,0V686M1083.35,0V686M1091.69,0V686M1100.03,0V686M1108.37,0V686M1116.71,0V686M1125.05,0V686M1133.39,0V686M1141.72,0V686M1150.06,0V686M1158.40,0V686M1166.74,0V686M1175.08,0V686M1183.42,0V686M1191.76,0V686M1200.10,0V686M1208.44,0V686M1216.78,0V686M1225.11,0V686M1233.45,0V686M1241.79,0V686M0,7.73H1243M0,16.07H1243M0,24.41H1243M0,32.75H1243M0,41.09H1243M0,49.43H1243M0,57.77H1243M0,66.11H1243M0,74.44H1243M0,82.78H1243M0,91.12H1243M0,99.46H1243M0,107.80H1243M0,116.14H1243M0,124.48H1243M0,132.82H1243M0,141.16H1243M0,149.50H1243M0,157.83H1243M0,166.17H1243M0,174.51H1243M0,182.85H1243M0,191.19H1243M0,199.53H1243M0,207.87H1243M0,216.21H1243M0,224.55H1243M0,232.89H1243M0,241.22H1243M0,249.56H1243M0,257.90H1243M0,266.24H1243M0,274.58H1243M0,282.92H1243M0,291.26H1243M0,299.60H1243M0,307.94H1243M0,316.28H1243M0,324.61H1243M0,332.95H1243M0,341.29H1243M0,349.63H1243M0,357.97H1243M0,366.31H1243M0,374.65H1243M0,382.99H1243M0,391.33H1243M0,399.67H1243M0,408.01H1243M0,416.34H1243M0,424.68H1243M0,433.02H1243M0,441.36H1243M0,449.70H1243M0,458.04H1243M0,466.38H1243M0,474.72H1243M0,483.06H1243M0,491.40H1243M0,499.73H1243M0,508.07H1243M0,516.41H1243M0,524.75H1243M0,533.09H1243M0,541.43H1243M0,549.77H1243M0,558.11H1243M0,566.45H1243M0,574.79H1243M0,583.12H1243M0,591.46H1243M0,599.80H1243M0,608.14H1243M0,616.48H1243M0,624.82H1243M0,633.16H1243M0,641.50H1243M0,649.84H1243M0,658.18H1243M0,666.51H1243M0,674.85H1243M0,683.19H1243" stroke="#e0e5f7" stroke-width="1" fill="none"/></svg>

<!-- scrollbars -->
<div class="a" style="left:1534px;top:156px;width:4px;height:294px;background:#868686;border-radius:2px"></div>
<div class="a" style="left:303px;top:830px;width:1119px;height:4px;background:#868686;border-radius:2px"></div>
<!-- corner button -->
<div class="a" style="left:1525px;top:821px;width:22px;height:22px;background:#f0f0f0;border-right:2px solid #505050;border-bottom:2px solid #505050;border-top:1px solid #fff;border-left:1px solid #fff"></div>
<div class="a" style="left:1527px;top:823px;width:13px;height:13px;background:#111"></div>
<div class="a" style="left:1529px;top:825px;width:9px;height:9px;background:repeating-linear-gradient(#d0d0d0 0 2px,#555 2px 3px)"></div>
<!-- main layout tab strip -->
<div class="a" style="left:282px;top:841px;width:1265px;height:1px;background:#fff"></div>
<div class="a" style="left:389px;top:842px;width:1158px;height:1px;background:#3c3c3c"></div>
<svg class="a" style="left:278px;top:841px" width="115" height="25">
 <polygon points="3,1 111,1 106,23 8,23" fill="#fdfdfd"/>
 <line x1="3.5" y1="1" x2="8" y2="23" stroke="#222" stroke-width="1"/>
 <line x1="111" y1="1" x2="106.5" y2="23" stroke="#222" stroke-width="1"/>
</svg>
<div class="a" style="left:286px;top:864px;width:1261px;height:1px;background:#c8c8c8"></div>
<div class="t" style="left:288.7px;top:846.5px;font-size:14.5px;font-weight:bold;letter-spacing:0.6px">Main Layout</div>
<!-- Layout/Report/Script tabs -->
<div class="a" style="left:284px;top:866px;width:58px;height:24px;background:#ebebeb;border-bottom:2px solid #1e1e1e;border-right:1px solid #1e1e1e;border-bottom-right-radius:2px"></div>
<div class="a" style="left:342px;top:870px;width:51px;height:17px;background:#f0f0f0;border-bottom:2px solid #2a2a2a;border-right:1px solid #2a2a2a;border-left:1px solid #2a2a2a;border-bottom-right-radius:2px"></div>
<div class="a" style="left:393px;top:870px;width:51px;height:17px;background:#f0f0f0;border-bottom:2px solid #2a2a2a;border-right:2px solid #2a2a2a;border-bottom-right-radius:2px"></div>
<div class="t" style="left:303.9px;top:874.5px;font-size:8.8px;font-weight:bold;color:#111">Layout</div>
<div class="t" style="left:360.6px;top:874.5px;font-size:8.5px;letter-spacing:-0.5px;color:#3a3a3a">Report</div>
<div class="t" style="left:413.9px;top:874.5px;font-size:8.5px;letter-spacing:-0.5px;color:#3a3a3a">Script</div>
<!-- Project1 tab -->
<div class="a" style="left:274px;top:896px;width:76px;height:20px;background:#f0f0f0;border-bottom:2px solid #2a2a2a;border-right:1px solid #2a2a2a;border-bottom-right-radius:2px"></div>
<div class="t" style="left:295.5px;top:898.5px;font-size:13px;color:#111">Project1</div>
<!-- tab icons -->
<svg class="a" style="left:270px;top:866px" width="180" height="50">
 <!-- layout icon -->
 <rect x="18.8" y="7.5" width="11.2" height="9.8" rx="0.8" fill="#6ef0f4" stroke="#1d3838" stroke-width="1.4"/>
 <rect x="19.5" y="8.2" width="9.8" height="1.6" fill="#1d3838"/>
 <rect x="20.5" y="8.5" width="1" height="0.8" fill="#ccc"/><rect x="22.5" y="8.5" width="3" height="0.8" fill="#ccc"/><rect x="26.5" y="8.5" width="1" height="0.8" fill="#ccc"/>
 <!-- report icon -->
 <rect x="75.7" y="6.7" width="10.8" height="9.8" fill="#fafafa" stroke="#333" stroke-width="1.3"/>
 <path d="M79.3,6.7 V16.5 M82.9,6.7 V16.5 M75.7,10 H86.5 M75.7,13.3 H86.5" stroke="#bbb" stroke-width="0.9"/>
 <path d="M76,16.8 H87 V7" fill="none" stroke="#222" stroke-width="1.2"/>
 <!-- script icon -->
 <path d="M130.5,15 L136.5,7.5" stroke="#1a1a1a" stroke-width="3.6" stroke-linecap="round"/>
 <path d="M131,14.5 L136,8" stroke="#2a8ad0" stroke-width="2"/>
 <circle cx="137" cy="6.7" r="2.2" fill="#1a1a1a"/><circle cx="136.5" cy="14.8" r="1.8" fill="#1a1a1a"/><circle cx="131" cy="8" r="1.5" fill="#1a1a1a"/>
 <!-- project icon -->
 <path d="M8,33 H14.5 L18,36 V45.2 H8 Z" fill="#e0e6f6" stroke="#8894c4" stroke-width="1"/>
 <rect x="5.5" y="32.3" width="7.5" height="7.5" rx="0.6" fill="#4e5cb4"/>
 <ellipse cx="9.2" cy="36.3" rx="2" ry="1.2" fill="none" stroke="#dfe4ff" stroke-width="0.9"/>
</svg>

<!-- header table -->
<div class="a" style="left:282px;top:135px;width:1243px;height:24px;background:#fff"></div>
<div class="a" style="left:282px;top:146px;width:1243px;height:1px;background:#286c5e"></div>
<div class="a" style="left:282px;top:158px;width:1243px;height:1px;background:#286c5e"></div>
<div class="a" style="left:615px;top:135px;width:1px;height:24px;background:#286c5e"></div>
<div class="a" style="left:948px;top:135px;width:1px;height:24px;background:#286c5e"></div>
<div class="a" style="left:1282px;top:135px;width:1px;height:24px;background:#286c5e"></div>
<div class="a" style="left:448px;top:147px;width:1px;height:12px;background:#286c5e"></div>
<div class="a" style="left:782px;top:147px;width:1px;height:12px;background:#286c5e"></div>
<div class="a" style="left:1115px;top:147px;width:1px;height:12px;background:#286c5e"></div>
<div class="a" style="left:1448px;top:147px;width:1px;height:12px;background:#286c5e"></div>
<div class="hd" style="left:284px;top:135.8px">Layout: Layout 1</div>
<div class="hd" style="left:617px;top:135.8px">Author:</div>
<div class="hd" style="left:951px;top:135.8px">Friday, July 04, 2025</div>
<div class="hd" style="left:1284px;top:135.8px">Sweep Iteration:  1/1</div>
<div class="hd" style="left:284px;top:148.8px">Bit rate (bits/sec):  1e+10</div>
<div class="hd" style="left:450px;top:148.8px">Sequence length (bits):  1024</div>
<div class="hd" style="left:617px;top:148.8px">Samples per bit:  32</div>
<div class="hd" style="left:784px;top:148.8px">Sample rate (Hz):  3.2e+11</div>
<div class="hd" style="left:951px;top:148.8px">Number of samples:  32768</div>
<div class="hd" style="left:1117px;top:148.8px">Symbol rate (symbols/sec):  1e+10</div>
<div class="hd" style="left:1284px;top:148.8px">Time window (s):  1.024e-07</div>
<div class="hd" style="left:1450px;top:148.8px">Guard bits:  0</div>

<!-- right toolbar -->
<svg class="a" style="left:1565px;top:118px" width="35" height="540">
 <defs>
  <pattern id="hgp2" width="3" height="3" patternUnits="userSpaceOnUse" x="0.5"><rect width="2" height="3" fill="#1e1e1e"/></pattern>
  <g id="zm">
   <circle cx="8.3" cy="8" r="6.6" fill="#f4f4f4" stroke="#222" stroke-width="1.5"/>
   <path d="M12.8,12.5 L17,17" stroke="#4646b0" stroke-width="2.6"/>
   <rect x="15" y="15" width="3.5" height="3.5" fill="#4646b0"/>
  </g>
  <g id="cmp">
   <path d="M0,3 L2.2,1.2 V4.8 Z" fill="#111"/>
   <rect x="2" y="2.4" width="1.6" height="1.2" fill="#111"/>
   <rect x="3.6" y="0.7" width="8" height="4.8" fill="#fff" stroke="#111" stroke-width="1.5"/>
   <rect x="11.5" y="2.4" width="1.5" height="1.2" fill="#111"/>
   <circle cx="13.6" cy="3" r="1.7" fill="#111"/>
  </g>
 </defs>
 <rect x="5" y="2.3" width="29" height="3" fill="url(#hgp2)"/>
 <rect x="5" y="146" width="29" height="3" fill="url(#hgp2)"/>
 <rect x="5" y="289" width="29" height="3" fill="url(#hgp2)"/>
 <!-- selected btn -->
 <rect x="3.5" y="8.5" width="28" height="25" fill="#d8ecfc" stroke="#6aa6dc" stroke-width="1"/>
 <path d="M12.3,11 V29 L16.3,25 L19.6,29.8 L21.5,28.6 L18.6,23.8 H23.8 Z" fill="#fff" stroke="#111" stroke-width="1.5" stroke-linejoin="round"/>
 <path d="M17,24 L20,29.5" stroke="#555" stroke-width="1.4"/>
 <!-- dashed corners -->
 <g fill="#a8a8a8">
  <path d="M9,37 h5 v2.5 h-2.5 v2.5 h-2.5 z"/>
  <path d="M26,37 h-5 v2.5 h2.5 v2.5 h2.5 z"/>
  <path d="M9,53.5 h5 v-2.5 h-2.5 v-2.5 h-2.5 z"/>
  <path d="M26,53.5 h-5 v-2.5 h2.5 v-2.5 h2.5 z"/>
 </g>
 <!-- arrow bar -->
 <path d="M9,71 H21" stroke="#a8a8a8" stroke-width="2.6"/>
 <path d="M20,69.5 L23.5,67.8 V75.5 L20,72.5 Z" fill="#a8a8a8"/>
 <!-- arrow -->
 <path d="M9,97 H19" stroke="#a8a8a8" stroke-width="2.6"/>
 <path d="M18.5,93.8 L23.5,97 L18.5,100.5 Z" fill="#a8a8a8"/>
 <!-- yellow -->
 <g stroke-width="2.2" fill="none">
  <path d="M7,118.5 H11 Q13,118.5 14,121 H19" stroke="#e8e840"/>
  <path d="M7,123.5 H11 Q14,123.5 15,121 H19" stroke="#a0a030"/>
  <path d="M7,129 H11 Q14,129 15,125.5 H19" stroke="#a0a030"/>
  <path d="M19,121 L22,123.5" stroke="#e8e840"/>
  <path d="M22,122.5 H29 M22,128 H29" stroke="#b0b040"/>
 </g>
 <rect x="20.8" y="114.5" width="4" height="3.5" fill="#f0f040"/>
 <rect x="22" y="121.5" width="7" height="1.2" fill="#e8e840"/><rect x="22" y="127" width="7" height="1.2" fill="#e8e840"/>
 <!-- rect -->
 <rect x="10.5" y="158.5" width="14.5" height="11.5" fill="none" stroke="#333" stroke-width="1.3"/>
 <!-- ellipse -->
 <ellipse cx="17.5" cy="190.8" rx="7.3" ry="6" fill="none" stroke="#333" stroke-width="1.3"/>
 <!-- line arrow -->
 <path d="M12,221.5 L23,211" stroke="#333" stroke-width="1.2"/>
 <path d="M24.5,209.5 L19.5,211.5 L22.5,214.5 Z" fill="#333"/>
 <!-- abc -->
 <text x="8.5" y="247" font-family="Liberation Sans" font-size="11" fill="#444">abc</text>
 <path d="M25.5,235.5 V249 M23.8,235.5 H27.3 M23.8,249 H27.3" stroke="#333" stroke-width="1"/>
 <!-- image -->
 <rect x="7.8" y="258.8" width="19.7" height="17.5" fill="#fff" stroke="#333" stroke-width="1.4"/>
 <path d="M8.5,271 Q12,267 15,269.5 Q18,272 21,268 Q24,265 27,268 V276 H8.5 Z" fill="#333"/>
 <circle cx="17.6" cy="265" r="3" fill="#333"/>
 <rect x="8.5" y="259.5" width="18.5" height="3" fill="#333"/>
 <!-- zooms -->
 <use href="#zm" x="7" y="299"/>
 <use href="#zm" x="7" y="325"/>
 <use href="#zm" x="7" y="350.5"/>
 <use href="#zm" x="7" y="376.3"/>
 <path d="M15.3,303.5 V310.5 M11.8,307 H18.8" stroke="#333" stroke-width="1.3"/>
 <path d="M11.5,333 H19" stroke="#333" stroke-width="1.5"/>
 <path d="M12.5,354.5 H17 L19,356.5 V362 H12.5 Z" fill="#fff" stroke="#333" stroke-width="1.2"/>
 <text x="10.3" y="388.5" font-family="Liberation Sans" font-size="7.5" font-weight="bold" fill="#333">1:1</text>
 <!-- selected bracket btn -->
 <rect x="3.5" y="398.5" width="28" height="25" fill="#d8ecfc" stroke="#6aa6dc" stroke-width="1"/>
 <circle cx="17.5" cy="410.5" r="4.5" fill="#f0f0a0"/>
 <path d="M7,403.5 H10 V416.5 H7 M28,403.5 H25 V416.5 H28" fill="none" stroke="#111" stroke-width="1.6"/>
 <path d="M10.5,410.5 H24.5" stroke="#222" stroke-width="1.2"/>
 <path d="M11,408 L14,410.5 L11,413 Z" fill="#111"/>
 <circle cx="19.5" cy="410.5" r="1.8" fill="#fff" stroke="#222" stroke-width="1"/>
 <!-- gray bracket -->
 <rect x="15" y="431" width="5" height="11" fill="#e8e8b8"/>
 <path d="M7,429.5 H10 V442.5 H7 M28,429.5 H25 V442.5 H28" fill="none" stroke="#555" stroke-width="1.5"/>
 <path d="M10.5,436 H24.5" stroke="#777" stroke-width="1.2"/>
 <path d="M11,433.5 L14,436 L11,438.5 Z" fill="#555"/>
 <circle cx="19.5" cy="436" r="1.8" fill="#fff" stroke="#666" stroke-width="1"/>
 <!-- selected btn 2 -->
 <rect x="3.5" y="449.5" width="28" height="25" fill="#d8ecfc" stroke="#6aa6dc" stroke-width="1"/>
 <use href="#cmp" x="9" y="456.5"/>
 <g fill="#888"><rect x="13" y="464" width="11" height="1.4"/><rect x="13" y="466.7" width="6" height="1.4"/><rect x="13" y="469.3" width="11" height="1.4"/></g>
 <!-- blue lines -->
 <use href="#cmp" x="9" y="482.5"/>
 <g fill="#5050e0"><rect x="13" y="490" width="4" height="1.6"/><rect x="13" y="492.8" width="14" height="1.6"/><rect x="13" y="495.5" width="10" height="1.6"/></g>
 <!-- selected btn 3 -->
 <rect x="3.5" y="501.5" width="28" height="25" fill="#d8ecfc" stroke="#6aa6dc" stroke-width="1"/>
 <use href="#cmp" x="9" y="508.5"/>
 <g fill="#10a020"><rect x="13" y="516" width="4" height="1.6"/><rect x="13" y="518.8" width="14" height="1.6"/><rect x="13" y="521.5" width="10" height="1.6"/></g>
</svg>

<!-- status -->
<div id="status" class="a"></div>
<div class="t" style="left:2px;top:924px;font-size:14.3px;color:#1a1a1a">[CTRL] - Duplicate, [SHIFT] - Add to selection, [CTRL + SHIFT] Resize layout.</div>

</body></html>
